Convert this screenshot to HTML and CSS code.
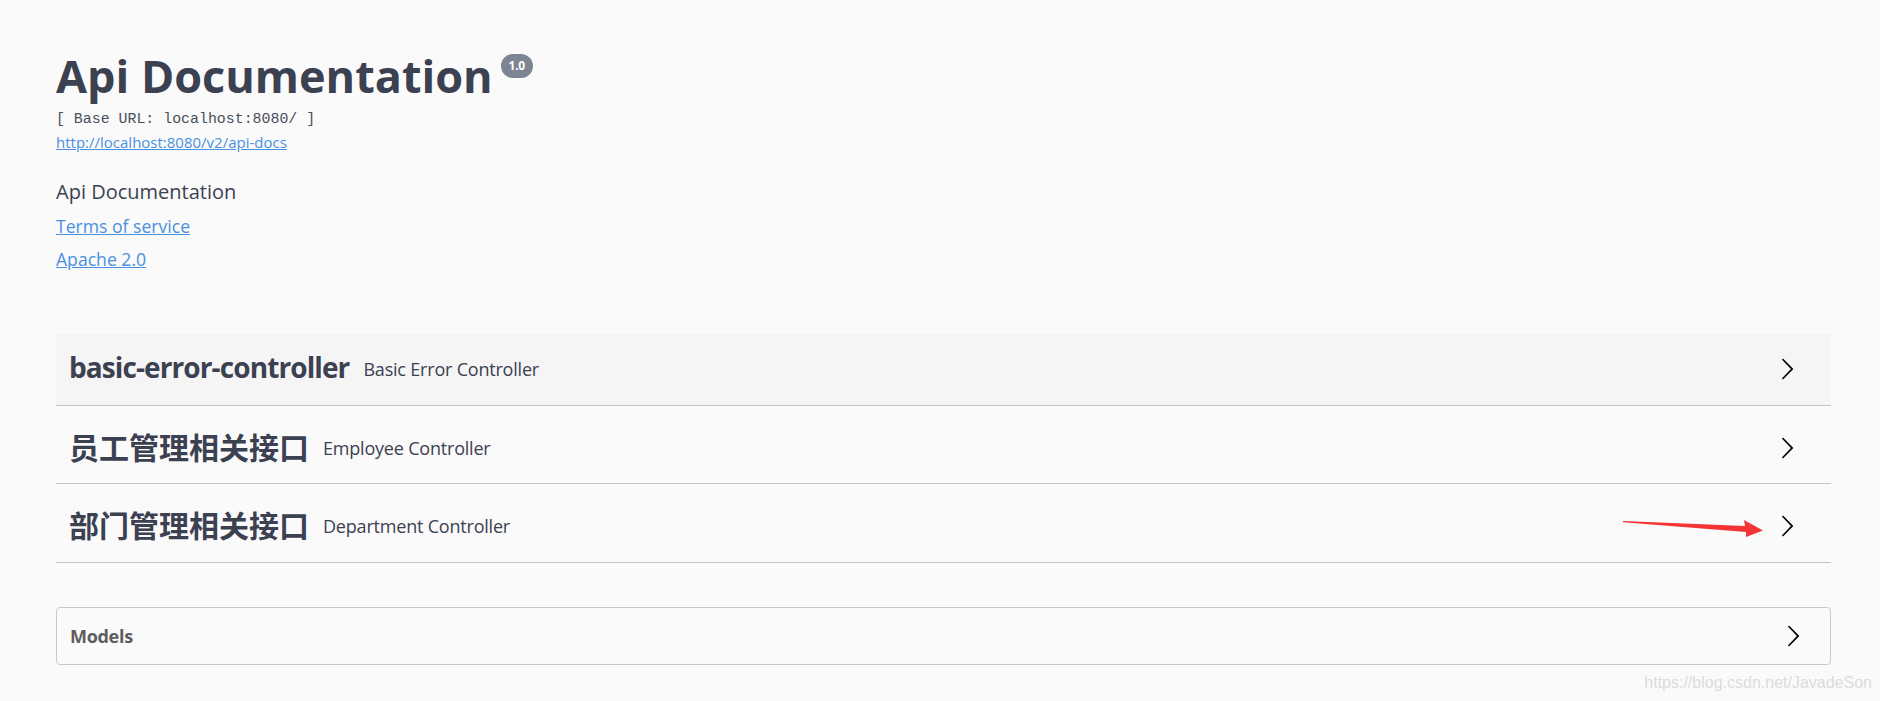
FILE: index.html
```html
<!DOCTYPE html>
<html lang="en">
<head>
<meta charset="utf-8">
<title>Api Documentation</title>
<link rel="stylesheet" href="styles.css">
</head>
<body>
<div class="page">
  <section class="info">
    <h2 class="title">Api Documentation <span class="version">1.0</span></h2>
    <div class="base-url">[ Base URL: localhost:8080/ ]</div>
    <a class="link spec-link" href="#">http://localhost:8080/v2/api-docs</a>
    <div class="description">Api Documentation</div>
    <a class="link info-link" href="#">Terms of service</a>
    <a class="link info-link" href="#">Apache 2.0</a>
  </section>

  <section class="tags">
    <div class="tag-row hovered">
      <h4 class="tag-name latin">basic-error-controller</h4>
      <small class="tag-desc">Basic Error Controller</small>
      <svg class="arrow" width="24" height="24" viewBox="0 0 20 20"><path d="M13.25 10L6.109 2.58a.697.697 0 0 1 0-.979.68.68 0 0 1 .969 0l7.83 7.908a.697.697 0 0 1 0 .979l-7.83 7.908a.68.68 0 0 1-.969 0 .697.697 0 0 1 0-.979L13.25 10z"/></svg>
    </div>
    <div class="tag-row">
      <h4 class="tag-name cjk">员工管理相关接口</h4>
      <small class="tag-desc">Employee Controller</small>
      <svg class="arrow" width="24" height="24" viewBox="0 0 20 20"><path d="M13.25 10L6.109 2.58a.697.697 0 0 1 0-.979.68.68 0 0 1 .969 0l7.83 7.908a.697.697 0 0 1 0 .979l-7.83 7.908a.68.68 0 0 1-.969 0 .697.697 0 0 1 0-.979L13.25 10z"/></svg>
    </div>
    <div class="tag-row">
      <h4 class="tag-name cjk">部门管理相关接口</h4>
      <small class="tag-desc">Department Controller</small>
      <svg class="arrow" width="24" height="24" viewBox="0 0 20 20"><path d="M13.25 10L6.109 2.58a.697.697 0 0 1 0-.979.68.68 0 0 1 .969 0l7.83 7.908a.697.697 0 0 1 0 .979l-7.83 7.908a.68.68 0 0 1-.969 0 .697.697 0 0 1 0-.979L13.25 10z"/></svg>
    </div>
  </section>

  <section class="models">
    <h4 class="models-title">Models</h4>
    <svg class="arrow" width="24" height="24" viewBox="0 0 20 20"><path d="M13.25 10L6.109 2.58a.697.697 0 0 1 0-.979.68.68 0 0 1 .969 0l7.83 7.908a.697.697 0 0 1 0 .979l-7.83 7.908a.68.68 0 0 1-.969 0 .697.697 0 0 1 0-.979L13.25 10z"/></svg>
  </section>

  <svg class="annotation" width="150" height="24" viewBox="0 0 150 24">
    <polygon points="0,3 122,8 121,2 140,12.5 123,19 123,14 0,4.2" fill="#f43535"/>
  </svg>

  <div class="watermark">https://blog.csdn.net/JavadeSon</div>
</div>
</body>
</html>
```

FILE: styles.css
```css
* { box-sizing: border-box; }

html, body {
  margin: 0;
  padding: 0;
  background: #fafafa;
}

body {
  font-family: "Open Sans", "Noto Sans", sans-serif;
  color: #3b4151;
}

.page {
  position: relative;
  width: 1880px;
  height: 701px;
  padding: 0 49px 0 56px;
  overflow: hidden;
}

.info {
  display: flex;
  flex-direction: column;
  align-items: flex-start;
  padding-top: 51px;
}

.title {
  margin: 0;
  font-size: 45px;
  line-height: 50px;
  font-weight: 700;
  color: #3b4151;
  display: flex;
  align-items: flex-start;
  gap: 8px;
}

.version {
  display: inline-block;
  margin-top: 3px;
  background: #7d8492;
  color: #fff;
  font-size: 12px;
  font-weight: 700;
  line-height: 24px;
  height: 24px;
  padding: 0 8px;
  border-radius: 12px;
  letter-spacing: -0.3px;
}

.base-url {
  margin-top: 8px;
  font-family: "Liberation Mono", "DejaVu Sans Mono", monospace;
  font-size: 14.9px;
  line-height: 20px;
  color: #4a4f5c;
}

.link {
  color: #4990e2;
  text-decoration: underline;
}

.spec-link {
  margin-top: 3px;
  font-size: 15px;
  line-height: 20px;
}

.description {
  margin-top: 27px;
  font-size: 20px;
  line-height: 26px;
  color: #3b4151;
}

.info-link {
  margin-top: 8.5px;
  font-size: 17.6px;
  line-height: 25px;
}

.tags {
  margin-top: 55px;
  display: flex;
  flex-direction: column;
}

.tag-row {
  display: flex;
  align-items: center;
  margin-top: 6.5px;
  height: 72px;
  padding: 0 32px 0 13px;
  border-bottom: 1px solid #c3c4c8;
}

.tag-row.hovered {
  background: #f5f5f5;
}

.tag-name {
  margin: 0;
  padding-bottom: 4px;
  font-weight: 700;
  color: #3b4151;
  line-height: 40px;
}

.tag-name.latin {
  font-family: "Open Sans", sans-serif;
  font-size: 28px;
  letter-spacing: -0.9px;
}

.tag-name.cjk {
  font-family: "Noto Sans CJK SC", sans-serif;
  font-size: 30px;
}

.tag-desc {
  flex: 1;
  padding: 0 14px;
  font-size: 18px;
  letter-spacing: -0.2px;
  color: #3b4151;
}

.arrow {
  flex: none;
  fill: #000;
}

.models {
  margin-top: 44px;
  height: 58px;
  display: flex;
  align-items: center;
  justify-content: space-between;
  padding: 0 25px 0 13px;
  border: 1px solid #c8c8c8;
  border-radius: 4px;
}

.models-title {
  margin: 0;
  font-size: 18px;
  font-weight: 700;
  color: #5e5e5e;
  letter-spacing: -0.3px;
}

.annotation {
  position: absolute;
  left: 1623px;
  top: 518px;
}

.watermark {
  position: absolute;
  right: 8px;
  top: 673px;
  font-family: "Liberation Sans", Arial, sans-serif;
  font-size: 16px;
  line-height: 20px;
  color: #dcdcdc;
}
```
